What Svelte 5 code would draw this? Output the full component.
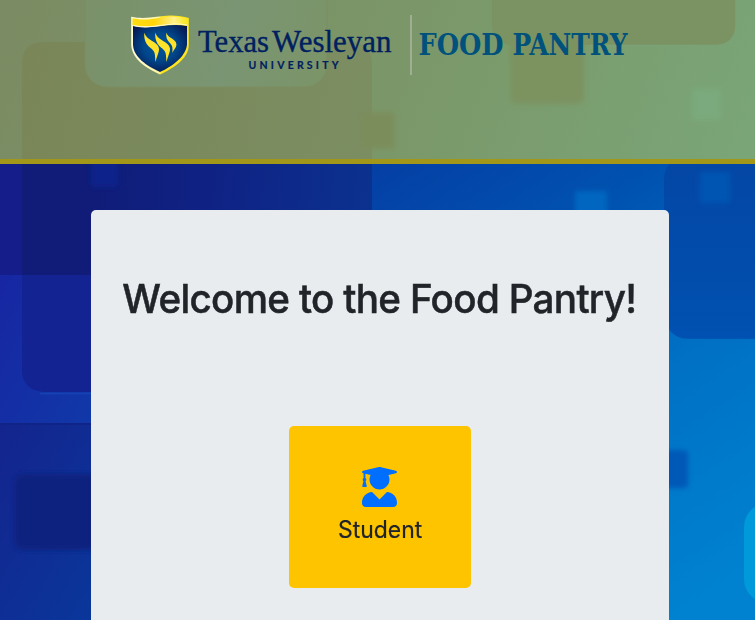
<script>
  const title = 'Welcome to the Food Pantry!';
</script>

<div class="page">
  <svg class="backdrop" viewBox="0 0 755 620" aria-hidden="true">
    <defs>
      <linearGradient id="sea" gradientUnits="userSpaceOnUse" x1="370" y1="160" x2="670" y2="620">
        <stop offset="0" stop-color="#053ea4" /><stop offset="0.3" stop-color="#0052b0" /><stop offset="0.6" stop-color="#0070c4" /><stop offset="1" stop-color="#0082d0" />
      </linearGradient>
      <linearGradient id="navy" gradientUnits="userSpaceOnUse" x1="90" y1="230" x2="372" y2="264">
        <stop offset="0" stop-color="#101c78" /><stop offset="0.4" stop-color="#0f2284" /><stop offset="1" stop-color="#0b328f" />
      </linearGradient>
      <linearGradient id="left" x1="0" y1="0" x2="1" y2="0.6">
        <stop offset="0" stop-color="#1726a2" /><stop offset="1" stop-color="#1038a8" />
      </linearGradient>
      <linearGradient id="low" x1="0" y1="0" x2="1" y2="1">
        <stop offset="0" stop-color="#14248e" /><stop offset="1" stop-color="#08399c" />
      </linearGradient>
      <linearGradient id="olive" gradientUnits="userSpaceOnUse" x1="0" y1="0" x2="700" y2="260">
        <stop offset="0" stop-color="#7b8b63" /><stop offset="0.5" stop-color="#7b9668" /><stop offset="1" stop-color="#7aa577" />
      </linearGradient>
      <linearGradient id="moss" gradientUnits="userSpaceOnUse" x1="20" y1="60" x2="372" y2="140">
        <stop offset="0" stop-color="#7a8658" /><stop offset="1" stop-color="#7b8e62" />
      </linearGradient>
      <linearGradient id="tile" gradientUnits="userSpaceOnUse" x1="85" y1="0" x2="327" y2="60">
        <stop offset="0" stop-color="#7a9169" /><stop offset="0.6" stop-color="#7a9573" /><stop offset="1" stop-color="#7b9468" />
      </linearGradient>
      <linearGradient id="panel" x1="0" y1="0" x2="0" y2="1">
        <stop offset="0" stop-color="#0446a4" /><stop offset="1" stop-color="#0051b1" />
      </linearGradient>
      <filter id="soft" x="-20%" y="-20%" width="140%" height="140%"><feGaussianBlur stdDeviation="2.5" /></filter>
    </defs>
    <rect width="755" height="620" fill="url(#sea)" />
    <rect y="164" width="372" height="111" fill="url(#navy)" />
    <rect y="164" width="22" height="111" fill="#141d8a" />
    <rect y="275" width="120" height="148" fill="url(#left)" />
    <path d="M22 275H120V392H44Q22 390 22 370Z" fill="#142392" />
    <path d="M40 393.5H120" stroke="#1541b2" stroke-width="2" />
    <rect y="423" width="120" height="197" fill="url(#low)" />
    <path d="M0 424H120" stroke="#102487" stroke-width="2" />
    <rect x="14" y="474" width="90" height="76" rx="9" fill="#10217f" filter="url(#soft)" />
    <rect x="91" y="158" width="27" height="29" rx="4" fill="#11218a" filter="url(#soft)" />
    <rect x="575" y="191" width="32" height="34" rx="2" fill="#0066bf" filter="url(#soft)" />
    <rect x="664" y="155" width="120" height="184" rx="24" fill="url(#panel)" />
    <path d="M684 339.5H755" stroke="#006fc3" stroke-width="1.5" />
    <rect x="700" y="172" width="30" height="31" rx="2" fill="#0054b2" filter="url(#soft)" />
    <rect x="650" y="450" width="38" height="38" rx="4" fill="#0058b7" filter="url(#soft)" />
    <rect x="744" y="503" width="80" height="100" rx="24" fill="#0099d9" />

    <rect width="755" height="159" fill="url(#olive)" />
    <path d="M22 159V64Q22 42 44 42H350Q372 42 372 64V159Z" fill="url(#moss)" />
    <rect x="85" y="-30" width="242" height="117" rx="22" fill="url(#tile)" stroke="#7d8d60" stroke-width="1" />
    <rect x="492" y="-30" width="244" height="75" rx="20" fill="#7b9263" />
    <path d="M590 45.5H716Q736 45 736 25V0" fill="none" stroke="#7ba276" stroke-width="1.5" />
    <rect x="510" y="30" width="74" height="74" rx="7" fill="#7c9361" filter="url(#soft)" />
    <rect x="360" y="112" width="35" height="37" rx="4" fill="#7b8d5c" filter="url(#soft)" />
    <rect x="692" y="89" width="29" height="31" rx="3" fill="#7aaa7d" filter="url(#soft)" />
    <rect y="159" width="755" height="5" fill="#a29718" />
  </svg>

  <header>
    <svg class="brand" viewBox="0 0 600 70" role="img" aria-label="Texas Wesleyan University Food Pantry">
      <defs>
        <linearGradient id="gold" x1="0" y1="0" x2="1" y2="0">
          <stop offset="0" stop-color="#ffdc12" /><stop offset="0.4" stop-color="#ffd50a" /><stop offset="0.75" stop-color="#fff08b" /><stop offset="1" stop-color="#fbe417" />
        </linearGradient>
        <radialGradient id="shield" cx="0.5" cy="0.45" r="0.62">
          <stop offset="0" stop-color="#00569b" /><stop offset="0.5" stop-color="#00468a" /><stop offset="1" stop-color="#07154f" />
        </radialGradient>
        <linearGradient id="rim" x1="0" y1="0" x2="1" y2="0">
          <stop offset="0" stop-color="#fffbd8" /><stop offset="0.48" stop-color="#fff6a1" /><stop offset="0.52" stop-color="#ffe61c" /><stop offset="1" stop-color="#ffe61c" />
        </linearGradient>
      </defs>
      <path d="M1.2 6.8C17 10 28 5.5 40 5.5Q51 5.4 58.8 8V35C58.8 49 42 59 30 64.5C17 58.5 1.2 49 1.2 34Z" fill="url(#rim)" />
      <path d="M3 15.5C18 21 36 12.5 57 16V34.5C56 47 41 57 30 62C17 56 3 47 3 34Z" fill="url(#shield)" />
      <path d="M2.5 8.2C20 12 30 6.5 41 6.5Q51 6.5 57.8 9V15C42 11.5 23 19.5 2.5 15Z" fill="url(#gold)" />
      <path d="M2.4 15.5C22 20 38 11.2 57 15" fill="none" stroke="#fffad0" stroke-width="1" />
      <g fill="#ffe32b">
        <path d="M14.4 22.7C15.5 26.2 18 28.4 21 30.3C25 32.8 28.8 35 29 38.8C29.1 43 26.6 46.5 25.8 51.8C24.7 49 25.8 44.5 23.6 41C21.6 37.9 18.4 37 16.4 33.4C14.4 29.8 13.9 26 14.4 22.7Z" />
        <path d="M25.4 22.7C26.5 26.2 29 28.4 32 30.3C36 32.8 39.8 35 40 38.8C40.1 43 37.6 46.5 36.8 51.8C35.7 49 36.8 44.5 34.6 41C32.6 37.9 29.4 37 27.4 33.4C25.4 29.8 24.9 26 25.4 22.7Z" />
        <path d="M36.4 22.7C37.4 25.8 39.6 26.8 42 28.6C44.6 30.5 46.8 32.3 46.4 35.3C46 38.5 43.4 39.7 42.6 43C42.2 40.5 43 37.6 41.6 35.3C40.3 33.1 38.6 32 37.4 29.8C36.2 27.6 36 25 36.4 22.7Z" />
      </g>
      <g class="name">
        <text x="68" y="42" font-size="32" textLength="71" lengthAdjust="spacingAndGlyphs">Texas</text>
        <text x="142" y="42" font-size="32" textLength="119.5" lengthAdjust="spacingAndGlyphs">Wesleyan</text>
      </g>
      <text class="sub" x="118.5" y="58.5" textLength="90">UNIVERSITY</text>
      <rect x="280" y="5" width="2" height="60" fill="#a0af94" />
      <g class="pantry">
        <text x="288.5" y="45" textLength="85" lengthAdjust="spacingAndGlyphs">FOOD</text>
        <text x="382.5" y="45" textLength="115" lengthAdjust="spacingAndGlyphs">PANTRY</text>
      </g>
    </svg>
  </header>

  <main>
    <h1>{title}</h1>
    <button class="student">
      <svg viewBox="0 0 448 512" aria-hidden="true"><path d="M319.4 320.6L224 416l-95.4-95.4C57.1 323.7 0 382.2 0 454.4v9.6c0 26.5 21.5 48 48 48h352c26.5 0 48-21.5 48-48v-9.6c0-72.2-57.1-130.7-128.6-133.8zM13.6 79.8l6.4 1.5v58.4c-7 4.2-12 11.5-12 20.3 0 8.4 4.6 15.4 11.1 19.7L3.5 242c-1.7 6.9 2.1 14 7.6 14h41.8c5.5 0 9.3-7.1 7.6-14l-15.6-62.3C51.4 175.4 56 168.4 56 160c0-8.8-5-16.1-12-20.3V87.1l66 15.9c-8.6 17.2-14 36.4-14 57 0 70.7 57.3 128 128 128s128-57.3 128-128c0-20.6-5.3-39.8-14-57l96.3-23.2c18.2-4.4 18.2-27.1 0-31.5l-190.4-46c-13-3.1-26.7-3.1-39.7 0L13.6 48.2c-18.1 4.4-18.1 27.2 0 31.6z" /></svg>
      <span>Student</span>
    </button>
  </main>
</div>

<style>
  .page {
    position: relative;
    height: 620px;
    overflow: hidden;
    display: flex;
    flex-direction: column;
    font-family: Inter, sans-serif;
    color: #212529;
  }
  .backdrop { position: absolute; inset: 0; width: 755px; height: 620px; }
  header { position: relative; height: 164px; flex: none; box-sizing: border-box; padding: 10px 0 0 130px; }
  .brand { display: block; width: 600px; height: 70px; overflow: visible; }
  .name { font-family: "Liberation Serif", serif; fill: #00205f; stroke: #00205f; stroke-width: .35px; }
  .sub { font: 700 10.5px Lato, sans-serif; fill: #00205f; stroke: #00205f; stroke-width: .2px; }
  .pantry { font: 700 29px "DejaVu Serif Condensed", "DejaVu Serif", serif; fill: #00527c; }
  main {
    position: relative;
    box-sizing: border-box;
    width: 578px;
    height: 450px;
    flex: none;
    margin: 46px 0 0 91px;
    padding-top: 65px;
    background: #e8ecef;
    border-radius: 5px;
    display: flex;
    flex-direction: column;
    align-items: center;
  }
  h1 {
    margin: 0 1px 0 0;
    font-size: 40px;
    line-height: 48px;
    font-weight: 500;
    letter-spacing: -.7px;
    white-space: nowrap;
    transform: scaleX(.965);
    -webkit-text-stroke: .5px #212529;
  }
  .student {
    box-sizing: border-box;
    width: 182px;
    height: 162px;
    margin-top: 103px;
    padding: 41px 0 0;
    border: 0;
    border-radius: 5px;
    background: #ffc400;
    color: #212529;
    font: 400 24px/36px Inter, sans-serif;
    display: flex;
    flex-direction: column;
    align-items: center;
    gap: 5px;
  }
  .student svg { width: 35px; height: 40px; fill: #006eff; flex: none; margin-right: 1px; }
  .student span { transform: scaleX(.955); -webkit-text-stroke: .2px #212529; }
</style>
